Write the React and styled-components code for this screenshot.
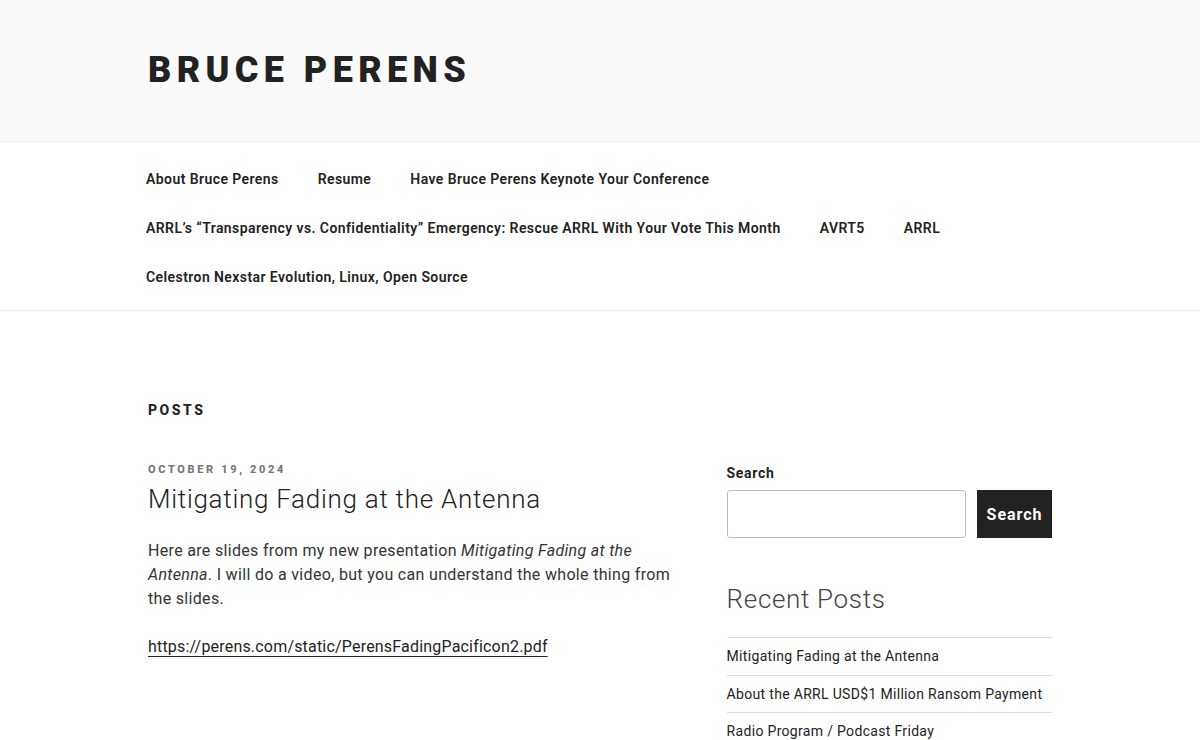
import React from 'react';
import styled, { createGlobalStyle } from 'styled-components';

const GlobalStyle = createGlobalStyle`
  * { box-sizing: border-box; }
  html, body { margin: 0; padding: 0; }
  body {
    background: #fff;
    color: #333;
    font-family: Roboto, "Liberation Sans", sans-serif;
    font-size: 16px;
    line-height: 1.5;
    letter-spacing: 0.02em;
  }
`;

const Wrap = styled.div`
  max-width: 1000px;
  margin: 0 auto;
  padding: 0 48px;
`;

const Masthead = styled.header`
  background: #fafafa;
  border-bottom: 1px solid #eee;
`;

const Branding = styled(Wrap)`
  padding-top: 48px;
  padding-bottom: 48px;
`;

const SiteTitle = styled.h1`
  margin: 0;
  font-size: 36px;
  line-height: 45px;
  font-weight: 900;
  letter-spacing: 0.15em;
  text-transform: uppercase;
  color: #222;
`;

const NavBar = styled.nav`
  border-bottom: 1px solid #eee;
`;

const NavWrap = styled(Wrap)`
  padding-top: 12.5px;
  padding-bottom: 8.5px;
  padding-left: 46px;
`;

const Menu = styled.ul`
  list-style: none;
  margin: 0;
  padding: 0;
  display: flex;
  flex-wrap: wrap;
  column-gap: 39px;
`;

const MenuLink = styled.a`
  display: block;
  padding: 14px 0;
  font-size: 14px;
  line-height: 21px;
  font-weight: 600;
  letter-spacing: 0.03em;
  color: #222;
  text-decoration: none;
`;

const Content = styled(Wrap)`
  padding-top: 89px;
`;

const PageTitle = styled.h2`
  margin: 0 0 40px;
  font-size: 14px;
  line-height: 20px;
  font-weight: 800;
  letter-spacing: 0.18em;
  text-transform: uppercase;
  color: #222;
`;

const Columns = styled.div`
  display: flex;
  justify-content: space-between;
  align-items: flex-start;
`;

const Primary = styled.main`
  width: 58%;
`;

const Secondary = styled.aside`
  width: 36%;
`;

const PostDate = styled.div`
  font-size: 11px;
  line-height: 20px;
  font-weight: 800;
  letter-spacing: 0.24em;
  text-transform: uppercase;
  color: #767676;
`;

const EntryTitle = styled.h2`
  margin: 1px 0 22px;
  font-size: 26px;
  line-height: 36px;
  font-weight: 300;
  letter-spacing: 0.028em;
  color: #222;
`;

const Para = styled.p`
  margin: 0 0 24px;
  color: #333;
`;

const BodyLink = styled.a`
  color: #222;
  letter-spacing: 0.012em;
  text-decoration: underline;
  text-underline-offset: 4px;
  text-decoration-thickness: 1px;
`;

const SearchLabel = styled.label`
  display: block;
  margin-top: 3px;
  font-size: 14px;
  line-height: 20px;
  font-weight: 700;
  letter-spacing: 0.048em;
  color: #222;
`;

const SearchRow = styled.div`
  display: flex;
  gap: 11px;
  margin-top: 7px;
`;

const SearchInput = styled.input`
  flex: 1;
  height: 48px;
  border: 1px solid #bbb;
  border-radius: 3px;
  background: #fff;
  padding: 0 10px;
  font: inherit;
`;

const SearchButton = styled.button`
  width: 75px;
  height: 48px;
  border: none;
  background: #222;
  color: #fff;
  font-family: inherit;
  font-size: 16px;
  font-weight: 700;
  letter-spacing: 0.06em;
  padding: 0;
  cursor: pointer;
`;

const WidgetTitle = styled.h2`
  margin: 43px 0 20px;
  font-size: 26px;
  line-height: 36px;
  font-weight: 300;
  letter-spacing: 0.026em;
  color: #444;
`;

const RecentList = styled.ul`
  list-style: none;
  margin: 0;
  padding: 0;
`;

const RecentItem = styled.li`
  border-top: 1px solid #ddd;
  padding: 8px 0;
  font-size: 14px;
  line-height: 20.5px;

  a {
    color: #222;
    text-decoration: none;
  }
`;

const menu = [
  'About Bruce Perens',
  'Resume',
  'Have Bruce Perens Keynote Your Conference',
  'ARRL\u2019s \u201cTransparency vs. Confidentiality\u201d Emergency: Rescue ARRL With Your Vote This Month',
  'AVRT5',
  'ARRL',
  'Celestron Nexstar Evolution, Linux, Open Source',
];

const recent = [
  'Mitigating Fading at the Antenna',
  'About the ARRL USD$1 Million Ransom Payment',
  'Radio Program / Podcast Friday',
];

export default function App() {
  return (
    <>
      <GlobalStyle />
      <Masthead>
        <Branding>
          <SiteTitle>Bruce Perens</SiteTitle>
        </Branding>
      </Masthead>
      <NavBar>
        <NavWrap>
          <Menu>
            {menu.map((item) => (
              <li key={item}>
                <MenuLink href="#">{item}</MenuLink>
              </li>
            ))}
          </Menu>
        </NavWrap>
      </NavBar>
      <Content>
        <PageTitle>Posts</PageTitle>
        <Columns>
          <Primary>
            <article>
              <PostDate>October 19, 2024</PostDate>
              <EntryTitle>Mitigating Fading at the Antenna</EntryTitle>
              <Para>
                Here are slides from my new presentation <em>Mitigating Fading at the Antenna</em>. I will do a
                video, but you can understand the whole thing from the slides.
              </Para>
              <Para>
                <BodyLink href="#">https://perens.com/static/PerensFadingPacificon2.pdf</BodyLink>
              </Para>
            </article>
          </Primary>
          <Secondary>
            <SearchLabel htmlFor="s">Search</SearchLabel>
            <SearchRow>
              <SearchInput id="s" type="text" />
              <SearchButton>Search</SearchButton>
            </SearchRow>
            <WidgetTitle>Recent Posts</WidgetTitle>
            <RecentList>
              {recent.map((r) => (
                <RecentItem key={r}>
                  <a href="#">{r}</a>
                </RecentItem>
              ))}
            </RecentList>
          </Secondary>
        </Columns>
      </Content>
    </>
  );
}
